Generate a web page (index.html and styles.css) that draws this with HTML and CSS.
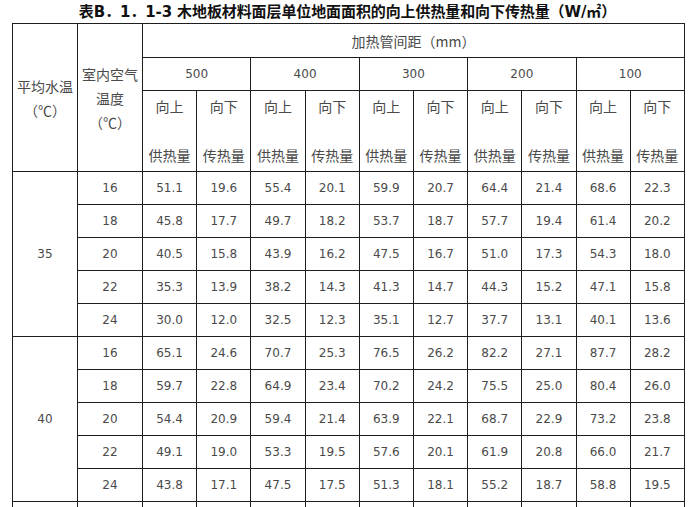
FILE: index.html
```html
<!DOCTYPE html>
<html lang="zh">
<head>
<meta charset="utf-8">
<link rel="stylesheet" href="styles.css">
</head>
<body>
<div class="page">
  <h1 class="title">表B．1．1-3 木地板材料面层单位地面面积的向上供热量和向下传热量（W/㎡）</h1>
  <table class="grid">
    <colgroup>
      <col class="c-wide"><col class="c-wide">
      <col><col><col><col><col><col><col><col><col><col>
    </colgroup>
    <tbody>
      <tr class="r-h1">
        <td rowspan="3" class="cjk"><div class="stack">平均水温<br>（℃）</div></td>
        <td rowspan="3" class="cjk"><div class="stack">室内空气<br>温度<br>（℃）</div></td>
        <td colspan="10" class="cjk">加热管间距（mm）</td>
      </tr>
      <tr class="r-h2">
        <td colspan="2">500</td><td colspan="2">400</td><td colspan="2">300</td><td colspan="2">200</td><td colspan="2">100</td>
      </tr>
      <tr class="r-h3">
        <td class="cjk"><div class="dir">向上<br><br>供热量</div></td><td class="cjk"><div class="dir">向下<br><br>传热量</div></td>
        <td class="cjk"><div class="dir">向上<br><br>供热量</div></td><td class="cjk"><div class="dir">向下<br><br>传热量</div></td>
        <td class="cjk"><div class="dir">向上<br><br>供热量</div></td><td class="cjk"><div class="dir">向下<br><br>传热量</div></td>
        <td class="cjk"><div class="dir">向上<br><br>供热量</div></td><td class="cjk"><div class="dir">向下<br><br>传热量</div></td>
        <td class="cjk"><div class="dir">向上<br><br>供热量</div></td><td class="cjk"><div class="dir">向下<br><br>传热量</div></td>
      </tr>
      <tr><td rowspan="5">35</td><td>16</td><td>51.1</td><td>19.6</td><td>55.4</td><td>20.1</td><td>59.9</td><td>20.7</td><td>64.4</td><td>21.4</td><td>68.6</td><td>22.3</td></tr>
      <tr><td>18</td><td>45.8</td><td>17.7</td><td>49.7</td><td>18.2</td><td>53.7</td><td>18.7</td><td>57.7</td><td>19.4</td><td>61.4</td><td>20.2</td></tr>
      <tr><td>20</td><td>40.5</td><td>15.8</td><td>43.9</td><td>16.2</td><td>47.5</td><td>16.7</td><td>51.0</td><td>17.3</td><td>54.3</td><td>18.0</td></tr>
      <tr><td>22</td><td>35.3</td><td>13.9</td><td>38.2</td><td>14.3</td><td>41.3</td><td>14.7</td><td>44.3</td><td>15.2</td><td>47.1</td><td>15.8</td></tr>
      <tr><td>24</td><td>30.0</td><td>12.0</td><td>32.5</td><td>12.3</td><td>35.1</td><td>12.7</td><td>37.7</td><td>13.1</td><td>40.1</td><td>13.6</td></tr>
      <tr><td rowspan="5">40</td><td>16</td><td>65.1</td><td>24.6</td><td>70.7</td><td>25.3</td><td>76.5</td><td>26.2</td><td>82.2</td><td>27.1</td><td>87.7</td><td>28.2</td></tr>
      <tr><td>18</td><td>59.7</td><td>22.8</td><td>64.9</td><td>23.4</td><td>70.2</td><td>24.2</td><td>75.5</td><td>25.0</td><td>80.4</td><td>26.0</td></tr>
      <tr><td>20</td><td>54.4</td><td>20.9</td><td>59.4</td><td>21.4</td><td>63.9</td><td>22.1</td><td>68.7</td><td>22.9</td><td>73.2</td><td>23.8</td></tr>
      <tr><td>22</td><td>49.1</td><td>19.0</td><td>53.3</td><td>19.5</td><td>57.6</td><td>20.1</td><td>61.9</td><td>20.8</td><td>66.0</td><td>21.7</td></tr>
      <tr><td>24</td><td>43.8</td><td>17.1</td><td>47.5</td><td>17.5</td><td>51.3</td><td>18.1</td><td>55.2</td><td>18.7</td><td>58.8</td><td>19.5</td></tr>
      <tr class="r-next"><td></td><td></td><td></td><td></td><td></td><td></td><td></td><td></td><td></td><td></td><td></td><td></td></tr>
    </tbody>
  </table>
</div>
</body>
</html>
```

FILE: styles.css
```css
html, body {
  margin: 0;
  padding: 0;
  background: #ffffff;
  overflow: hidden;
}

.page {
  width: 695px;
  padding: 0 0 0 12px;
  box-sizing: border-box;
}

.title {
  margin: 0;
  margin-left: -12px;
  height: 23px;
  line-height: 24px;
  text-align: center;
  font-family: "DejaVu Sans", "Noto Sans CJK SC", sans-serif;
  font-size: 15px;
  font-weight: bold;
  color: #111111;
  white-space: nowrap;
  letter-spacing: -0.1px;
}

.grid {
  width: 673px;
  table-layout: fixed;
  border-collapse: collapse;
  font-family: "DejaVu Sans", "Noto Sans CJK SC", sans-serif;
  font-size: 12px;
  color: #4a4a4a;
}

.c-wide {
  width: 65px;
}

.grid td {
  border: 1px solid #1e1e1e;
  padding: 0;
  text-align: center;
  vertical-align: middle;
  height: 32px;
  white-space: nowrap;
}

.grid .cjk {
  font-family: "Noto Sans CJK SC", "DejaVu Sans", sans-serif;
  font-size: 14px;
}

.grid .r-h1 td {
  height: 33px;
}

.grid .r-h2 td {
  height: 32px;
}

.grid .r-h3 td {
  height: 80px;
}

.stack {
  line-height: 24px;
}

.dir {
  line-height: 24.5px;
}
```
